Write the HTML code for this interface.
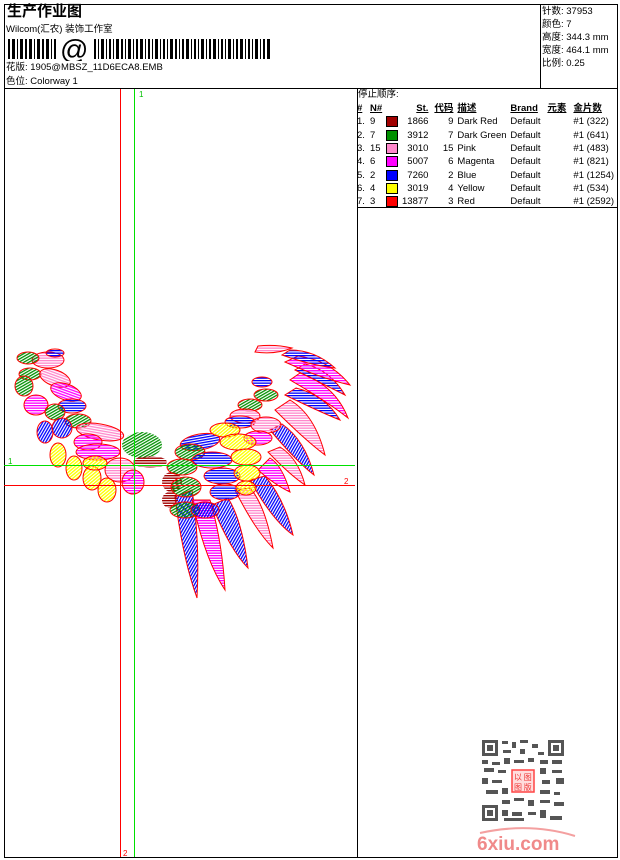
<!DOCTYPE html>
<html><head><meta charset="utf-8"><style>
body{margin:0;background:#fff;width:620px;height:860px;position:relative;overflow:hidden;font-family:"Liberation Sans","Noto Sans CJK SC",sans-serif;color:#000}
.a{position:absolute;white-space:nowrap;font-size:9.5px;line-height:11px}
.ln{position:absolute;background:#000}
table{position:absolute;left:357px;top:102px;border-collapse:collapse;font-size:9.5px}
td{padding:0;height:13.3px;line-height:13px;white-space:nowrap}
.sw{display:inline-block;width:10px;height:9px;border:1px solid #000;vertical-align:middle}
</style></head><body>
<div class="ln" style="left:4px;top:4px;width:614px;height:1px"></div>
<div class="ln" style="left:4px;top:857px;width:614px;height:1px"></div>
<div class="ln" style="left:4px;top:4px;width:1px;height:854px"></div>
<div class="ln" style="left:617px;top:4px;width:1px;height:854px"></div>
<div class="ln" style="left:4px;top:88px;width:614px;height:1px"></div>
<div class="ln" style="left:540px;top:4px;width:1px;height:84px"></div>
<div class="ln" style="left:357px;top:88px;width:1px;height:770px"></div>
<div class="ln" style="left:357px;top:207px;width:261px;height:1px"></div>

<div class="a" style="left:7px;top:3px;font-size:15px;line-height:18px;font-weight:bold">生产作业图</div>
<div class="a" style="left:6px;top:24px">Wilcom(汇农) 装饰工作室</div>
<svg style="position:absolute;left:8px;top:37px" width="265" height="24">
<g fill="#000">
<rect x="0" y="2" width="2" height="20"/><rect x="4" y="2" width="3" height="20"/><rect x="9" y="2" width="1" height="20"/><rect x="12" y="2" width="3" height="20"/><rect x="17" y="2" width="2" height="20"/><rect x="21" y="2" width="3" height="20"/><rect x="26" y="2" width="1" height="20"/><rect x="29" y="2" width="3" height="20"/><rect x="34" y="2" width="2" height="20"/><rect x="38" y="2" width="3" height="20"/><rect x="43" y="2" width="1" height="20"/><rect x="46" y="2" width="2" height="20"/>
</g>
<text x="52" y="22" font-family="Liberation Sans" font-size="28" fill="#000">@</text>
<g fill="#000">
<rect x="86" y="2" width="2" height="20"/><rect x="90" y="2" width="1" height="20"/><rect x="93" y="2" width="3" height="20"/><rect x="98" y="2" width="1" height="20"/><rect x="101" y="2" width="2" height="20"/><rect x="105" y="2" width="1" height="20"/><rect x="108" y="2" width="3" height="20"/><rect x="113" y="2" width="2" height="20"/><rect x="117" y="2" width="1" height="20"/><rect x="120" y="2" width="3" height="20"/><rect x="125" y="2" width="1" height="20"/><rect x="128" y="2" width="2" height="20"/><rect x="132" y="2" width="3" height="20"/><rect x="137" y="2" width="1" height="20"/><rect x="140" y="2" width="2" height="20"/><rect x="144" y="2" width="1" height="20"/><rect x="147" y="2" width="3" height="20"/><rect x="152" y="2" width="1" height="20"/><rect x="155" y="2" width="2" height="20"/><rect x="159" y="2" width="1" height="20"/><rect x="162" y="2" width="3" height="20"/><rect x="167" y="2" width="2" height="20"/><rect x="171" y="2" width="1" height="20"/><rect x="174" y="2" width="2" height="20"/><rect x="178" y="2" width="3" height="20"/><rect x="183" y="2" width="1" height="20"/><rect x="186" y="2" width="2" height="20"/><rect x="190" y="2" width="1" height="20"/><rect x="193" y="2" width="3" height="20"/><rect x="198" y="2" width="1" height="20"/><rect x="201" y="2" width="2" height="20"/><rect x="205" y="2" width="3" height="20"/><rect x="210" y="2" width="1" height="20"/><rect x="213" y="2" width="2" height="20"/><rect x="217" y="2" width="1" height="20"/><rect x="220" y="2" width="3" height="20"/><rect x="225" y="2" width="1" height="20"/><rect x="228" y="2" width="2" height="20"/><rect x="232" y="2" width="3" height="20"/><rect x="237" y="2" width="1" height="20"/><rect x="240" y="2" width="2" height="20"/><rect x="244" y="2" width="1" height="20"/><rect x="247" y="2" width="3" height="20"/><rect x="252" y="2" width="1" height="20"/><rect x="255" y="2" width="2" height="20"/><rect x="259" y="2" width="3" height="20"/>
</g></svg>
<div class="a" style="left:6px;top:62px">花版: 1905@MBSZ_11D6ECA8.EMB</div>
<div class="a" style="left:6px;top:76px">色位: Colorway 1</div>

<div class="a" style="left:542px;top:6px">针数: 37953</div>
<div class="a" style="left:542px;top:19px">颜色: 7</div>
<div class="a" style="left:542px;top:32px">高度: 344.3 mm</div>
<div class="a" style="left:542px;top:45px">宽度: 464.1 mm</div>
<div class="a" style="left:542px;top:58px">比例: 0.25</div>

<div class="a" style="left:358px;top:89px">停止顺序:</div>
<table>
<tr style="font-weight:bold;text-decoration:underline"><td style="width:13px">#</td><td style="width:16px">N#</td><td style="width:16px"></td><td style="width:25px;text-align:right">St.</td><td style="width:25px;text-align:right">代码</td><td style="width:4px"></td><td style="width:53px">描述</td><td style="width:37px">Brand</td><td style="width:26px">元素</td><td>金片数</td></tr>
<tr><td>1.</td><td>9</td><td><span class="sw" style="background:#a00000"></span></td><td align="right">1866</td><td align="right">9</td><td></td><td>Dark Red</td><td>Default</td><td></td><td>#1 (322)</td></tr>
<tr><td>2.</td><td>7</td><td><span class="sw" style="background:#009000"></span></td><td align="right">3912</td><td align="right">7</td><td></td><td>Dark Green</td><td>Default</td><td></td><td>#1 (641)</td></tr>
<tr><td>3.</td><td>15</td><td><span class="sw" style="background:#ff88cc"></span></td><td align="right">3010</td><td align="right">15</td><td></td><td>Pink</td><td>Default</td><td></td><td>#1 (483)</td></tr>
<tr><td>4.</td><td>6</td><td><span class="sw" style="background:#ff00ff"></span></td><td align="right">5007</td><td align="right">6</td><td></td><td>Magenta</td><td>Default</td><td></td><td>#1 (821)</td></tr>
<tr><td>5.</td><td>2</td><td><span class="sw" style="background:#0000ff"></span></td><td align="right">7260</td><td align="right">2</td><td></td><td>Blue</td><td>Default</td><td></td><td>#1 (1254)</td></tr>
<tr><td>6.</td><td>4</td><td><span class="sw" style="background:#ffff00"></span></td><td align="right">3019</td><td align="right">4</td><td></td><td>Yellow</td><td>Default</td><td></td><td>#1 (534)</td></tr>
<tr><td>7.</td><td>3</td><td><span class="sw" style="background:#ff0000"></span></td><td align="right">13877</td><td align="right">3</td><td></td><td>Red</td><td>Default</td><td></td><td>#1 (2592)</td></tr>
</table>

<svg style="position:absolute;left:0;top:0" width="620" height="860">
<defs>
<pattern id="pg" width="2.5" height="2.5" patternUnits="userSpaceOnUse" patternTransform="rotate(-30)"><rect width="3" height="1.3" fill="#009000"/></pattern>
<pattern id="pp" width="2.5" height="2.5" patternUnits="userSpaceOnUse"><rect width="3" height="1.3" fill="#ff88cc"/></pattern>
<pattern id="pm" width="2.5" height="2.5" patternUnits="userSpaceOnUse"><rect width="3" height="1.3" fill="#ff00ff"/></pattern>
<pattern id="pb" width="2.5" height="2.5" patternUnits="userSpaceOnUse" patternTransform="rotate(-60)"><rect width="3" height="1.3" fill="#0000ff"/></pattern>
<pattern id="pb2" width="2.5" height="2.5" patternUnits="userSpaceOnUse"><rect width="3" height="1.3" fill="#0000ff"/></pattern>
<pattern id="py" width="2.5" height="2.5" patternUnits="userSpaceOnUse" patternTransform="rotate(-40)"><rect width="3" height="1.4" fill="#ffff00"/></pattern>
<pattern id="pr" width="2.5" height="2.5" patternUnits="userSpaceOnUse"><rect width="3" height="1.4" fill="#a00000"/></pattern>
</defs>
<g stroke="#ff0000" stroke-width="1">
<path d="M175,497 Q183,560 197,598 Q200,540 192,490 Z" fill="url(#pb)"/>
<path d="M192,500 Q205,560 225,590 Q222,540 210,500 Z" fill="url(#pm)"/>
<path d="M212,505 Q230,550 248,568 Q242,520 228,498 Z" fill="url(#pb)"/>
<path d="M235,490 Q255,530 273,548 Q265,505 250,488 Z" fill="url(#pp)"/>
<path d="M250,480 Q272,520 293,535 Q285,500 265,476 Z" fill="url(#pb)"/>
<path d="M258,470 Q275,485 290,492 Q282,465 270,458 Z" fill="url(#pm)"/>
<path d="M268,452 Q290,475 305,485 Q298,458 280,447 Z" fill="url(#pp)"/>
<path d="M270,430 Q295,460 314,475 Q305,440 282,424 Z" fill="url(#pb)"/>
<path d="M275,410 Q305,440 325,455 Q315,415 290,400 Z" fill="url(#pp)"/>
<path d="M285,395 Q320,412 340,420 Q325,395 296,388 Z" fill="url(#pb2)"/>
<path d="M290,380 Q325,400 348,418 Q335,385 300,373 Z" fill="url(#pm)"/>
<path d="M295,370 Q325,385 345,395 Q330,370 305,364 Z" fill="url(#pb2)"/>
<path d="M285,362 Q320,378 350,385 Q330,360 298,356 Z" fill="url(#pm)"/>
<path d="M282,355 Q310,365 335,368 Q315,350 290,350 Z" fill="url(#pb2)"/>
<path d="M255,352 Q275,355 292,348 Q275,344 258,346 Z" fill="url(#pp)"/>
<ellipse cx="48" cy="360" rx="16" ry="8" fill="url(#pp)"/>
<ellipse cx="28" cy="358" rx="11" ry="6" fill="url(#pg)"/>
<ellipse cx="55" cy="353" rx="9" ry="4" fill="url(#pb2)"/>
<ellipse cx="30" cy="374" rx="11" ry="6" fill="url(#pg)"/>
<ellipse cx="55" cy="378" rx="16" ry="8" transform="rotate(20 55 378)" fill="url(#pp)"/>
<ellipse cx="24" cy="386" rx="9" ry="10" fill="url(#pg)"/>
<ellipse cx="66" cy="392" rx="16" ry="8" transform="rotate(20 66 392)" fill="url(#pm)"/>
<ellipse cx="36" cy="405" rx="12" ry="10" fill="url(#pm)"/>
<ellipse cx="72" cy="406" rx="14" ry="7" fill="url(#pb2)"/>
<ellipse cx="55" cy="412" rx="10" ry="8" fill="url(#pg)"/>
<ellipse cx="78" cy="421" rx="13" ry="7" fill="url(#pg)"/>
<ellipse cx="45" cy="432" rx="8" ry="11" fill="url(#pb)"/>
<ellipse cx="62" cy="428" rx="10" ry="10" fill="url(#pb)"/>
<ellipse cx="100" cy="432" rx="24" ry="8" transform="rotate(10 100 432)" fill="url(#pp)"/>
<ellipse cx="88" cy="442" rx="14" ry="8" fill="url(#pm)"/>
<ellipse cx="98" cy="452" rx="22" ry="8" fill="url(#pm)"/>
<ellipse cx="58" cy="455" rx="8" ry="12" fill="url(#py)"/>
<ellipse cx="74" cy="468" rx="8" ry="12" fill="url(#py)"/>
<ellipse cx="92" cy="478" rx="9" ry="12" fill="url(#py)"/>
<ellipse cx="107" cy="490" rx="9" ry="12" fill="url(#py)"/>
<ellipse cx="95" cy="463" rx="12" ry="7" fill="url(#py)"/>
<ellipse cx="120" cy="470" rx="15" ry="12" fill="url(#pp)"/>
<ellipse cx="133" cy="482" rx="11" ry="12" fill="url(#pm)"/>
<ellipse cx="142" cy="445" rx="20" ry="13" fill="url(#pg)" stroke="none"/>
<ellipse cx="150" cy="462" rx="17" ry="6" fill="url(#pr)" stroke="none"/>
<ellipse cx="172" cy="482" rx="10" ry="10" fill="url(#pr)" stroke="none"/>
<ellipse cx="170" cy="500" rx="8" ry="8" fill="url(#pr)" stroke="none"/>
<ellipse cx="200" cy="442" rx="20" ry="8" transform="rotate(-10 200 442)" fill="url(#pb2)"/>
<ellipse cx="190" cy="452" rx="15" ry="8" fill="url(#pg)"/>
<ellipse cx="182" cy="467" rx="15" ry="8" fill="url(#pg)"/>
<ellipse cx="186" cy="487" rx="15" ry="10" fill="url(#pg)"/>
<ellipse cx="185" cy="510" rx="15" ry="8" fill="url(#pg)"/>
<ellipse cx="212" cy="460" rx="20" ry="8" fill="url(#pb2)"/>
<ellipse cx="222" cy="476" rx="18" ry="8" fill="url(#pb2)"/>
<ellipse cx="225" cy="492" rx="15" ry="8" fill="url(#pb2)"/>
<ellipse cx="205" cy="510" rx="14" ry="8" fill="url(#pb)"/>
<ellipse cx="250" cy="405" rx="12" ry="6" fill="url(#pg)"/>
<ellipse cx="266" cy="395" rx="12" ry="6" fill="url(#pg)"/>
<ellipse cx="262" cy="382" rx="10" ry="5" fill="url(#pb2)"/>
<ellipse cx="245" cy="416" rx="15" ry="7" fill="url(#pp)"/>
<ellipse cx="240" cy="422" rx="15" ry="6" fill="url(#pb2)"/>
<ellipse cx="266" cy="425" rx="15" ry="8" fill="url(#pp)"/>
<ellipse cx="258" cy="438" rx="14" ry="7" fill="url(#pm)"/>
<ellipse cx="225" cy="430" rx="15" ry="7" fill="url(#py)"/>
<ellipse cx="238" cy="442" rx="18" ry="8" fill="url(#py)"/>
<ellipse cx="246" cy="457" rx="15" ry="8" fill="url(#py)"/>
<ellipse cx="247" cy="473" rx="13" ry="8" fill="url(#py)"/>
<ellipse cx="246" cy="488" rx="10" ry="7" fill="url(#py)"/>
</g>
<rect x="4" y="465" width="351" height="1" fill="#00e000"/>
<rect x="4" y="485" width="351" height="1" fill="#ff0000"/>
<rect x="120" y="89" width="1" height="768" fill="#ff0000"/>
<rect x="134" y="89" width="1" height="768" fill="#00e000"/>
<text x="139" y="97" font-size="8" fill="#00c000" font-family="Liberation Sans">1</text>
<text x="8" y="464" font-size="8" fill="#00c000" font-family="Liberation Sans">1</text>
<text x="344" y="484" font-size="8" fill="#ff0000" font-family="Liberation Sans">2</text>
<text x="123" y="856" font-size="8" fill="#ff0000" font-family="Liberation Sans">2</text>
<g fill="#555">
<rect x="482" y="740" width="82" height="82" fill="#fff"/>
<rect x="482" y="740" width="16" height="16"/><rect x="485" y="743" width="10" height="10" fill="#fff"/><rect x="487" y="745" width="6" height="6"/>
<rect x="548" y="740" width="16" height="16"/><rect x="551" y="743" width="10" height="10" fill="#fff"/><rect x="553" y="745" width="6" height="6"/>
<rect x="482" y="805" width="16" height="16"/><rect x="485" y="808" width="10" height="10" fill="#fff"/><rect x="487" y="810" width="6" height="6"/>
<rect x="502" y="741" width="6" height="3"/><rect x="512" y="742" width="4" height="6"/><rect x="520" y="740" width="8" height="3"/><rect x="532" y="744" width="6" height="4"/><rect x="503" y="750" width="8" height="3"/><rect x="520" y="749" width="5" height="5"/><rect x="538" y="752" width="6" height="3"/>
<rect x="482" y="760" width="6" height="4"/><rect x="492" y="762" width="8" height="3"/><rect x="504" y="758" width="6" height="6"/><rect x="514" y="760" width="10" height="3"/><rect x="528" y="758" width="6" height="4"/><rect x="540" y="760" width="8" height="4"/><rect x="552" y="760" width="10" height="4"/>
<rect x="484" y="768" width="10" height="4"/><rect x="498" y="770" width="8" height="3"/><rect x="540" y="768" width="6" height="6"/><rect x="552" y="770" width="10" height="3"/>
<rect x="482" y="778" width="6" height="6"/><rect x="492" y="780" width="10" height="3"/><rect x="542" y="780" width="8" height="4"/><rect x="556" y="778" width="8" height="6"/>
<rect x="486" y="790" width="12" height="4"/><rect x="502" y="788" width="6" height="6"/><rect x="540" y="790" width="10" height="4"/><rect x="554" y="792" width="6" height="3"/>
<rect x="502" y="800" width="8" height="4"/><rect x="514" y="798" width="10" height="3"/><rect x="528" y="800" width="6" height="6"/><rect x="540" y="800" width="10" height="3"/><rect x="554" y="802" width="10" height="4"/>
<rect x="502" y="810" width="6" height="6"/><rect x="512" y="812" width="10" height="4"/><rect x="528" y="812" width="8" height="3"/><rect x="540" y="810" width="6" height="8"/><rect x="550" y="816" width="12" height="4"/><rect x="504" y="818" width="20" height="3"/>
</g>
<rect x="512" y="770" width="22" height="22" fill="#fdd" stroke="#f44" stroke-width="1.5"/>
<text x="514" y="780" font-size="8" fill="#e33" font-family="Noto Sans CJK SC,sans-serif">以 图</text>
<text x="514" y="790" font-size="8" fill="#e33" font-family="Noto Sans CJK SC,sans-serif">图 版</text>
<path d="M480,833 Q530,822 575,836" stroke="#f4a0a0" stroke-width="2" fill="none"/>
<text x="477" y="850" font-size="19" font-weight="bold" fill="#f08a8a" font-family="Liberation Sans">6xiu.com</text>
</svg>
</body></html>
